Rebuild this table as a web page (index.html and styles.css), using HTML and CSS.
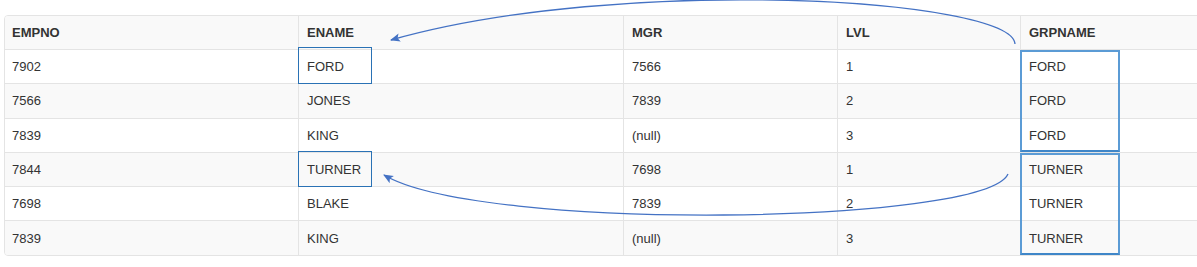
FILE: index.html
```html
<!DOCTYPE html>
<html lang="en">
<head>
<meta charset="utf-8">
<title>Hierarchy query result</title>
<link rel="stylesheet" href="styles.css">
</head>
<body>
<div class="stage">
  <div class="frame">
    <table class="grid">
      <colgroup>
        <col class="c1"><col class="c2"><col class="c3"><col class="c4"><col class="c5">
      </colgroup>
      <thead>
        <tr><th>EMPNO</th><th>ENAME</th><th>MGR</th><th>LVL</th><th>GRPNAME</th></tr>
      </thead>
      <tbody>
        <tr><td>7902</td><td>FORD</td><td>7566</td><td>1</td><td>FORD</td></tr>
        <tr><td>7566</td><td>JONES</td><td>7839</td><td>2</td><td>FORD</td></tr>
        <tr><td>7839</td><td>KING</td><td>(null)</td><td>3</td><td>FORD</td></tr>
        <tr><td>7844</td><td>TURNER</td><td>7698</td><td>1</td><td>TURNER</td></tr>
        <tr><td>7698</td><td>BLAKE</td><td>7839</td><td>2</td><td>TURNER</td></tr>
        <tr><td>7839</td><td>KING</td><td>(null)</td><td>3</td><td>TURNER</td></tr>
      </tbody>
    </table>
  </div>

  <div class="mark mark-ename mark-ford"></div>
  <div class="mark mark-ename mark-turner"></div>
  <div class="mark mark-grp mark-grp-ford"></div>
  <div class="mark mark-grp mark-grp-turner"></div>

  <svg class="arrows" width="1197" height="267" viewBox="0 0 1197 267" xmlns="http://www.w3.org/2000/svg">
    <defs>
      <marker id="head" markerUnits="userSpaceOnUse" markerWidth="10" markerHeight="10" viewBox="0 0 10 10" refX="9" refY="5" orient="auto">
        <path d="M0 0.8 L10 5 L0 9.2 L2.2 5 Z" fill="#4472c4"/>
      </marker>
    </defs>
    <path d="M1015 44 C1012 -2, 620 -25, 391 40" fill="none" stroke="#4472c4" stroke-width="1.3" marker-end="url(#head)"/>
    <path d="M1008 174 C985 225, 480 232, 384 175" fill="none" stroke="#4472c4" stroke-width="1.3" marker-end="url(#head)"/>
  </svg>
</div>
</body>
</html>
```

FILE: styles.css
```css
html, body {
  margin: 0;
  padding: 0;
  background: #ffffff;
  overflow: hidden;
}

.stage {
  position: relative;
  width: 1197px;
  height: 267px;
  padding: 15px 0 0 4px;
  box-sizing: border-box;
  font-family: "Liberation Sans", Arial, Helvetica, sans-serif;
  font-size: 13px;
  color: #333333;
}

.frame {
  width: 1230px;
  border: 1px solid #e4e4e4;
  border-radius: 4px;
  overflow: hidden;
}

.grid {
  width: 100%;
  border-collapse: separate;
  border-spacing: 0;
  table-layout: fixed;
}

.c1 { width: 293px; }
.c2 { width: 325px; }
.c3 { width: 214px; }
.c4 { width: 183px; }

.grid th,
.grid td {
  box-sizing: border-box;
  height: 34.3px;
  padding: 0 8px;
  line-height: 17px;
  text-align: left;
  vertical-align: middle;
  border-top: 1px solid #e4e4e4;
  border-left: 1px solid #e4e4e4;
  white-space: nowrap;
}

.grid th {
  height: 33px;
  border-top: 0;
  font-weight: bold;
  background: #f9f9f9;
}

.grid th:first-child,
.grid td:first-child {
  border-left: 0;
  padding-left: 7px;
}

.grid tbody tr:nth-child(even) td {
  background: #f9f9f9;
}

.mark {
  position: absolute;
  box-sizing: border-box;
  pointer-events: none;
}

.mark-ename {
  left: 298px;
  width: 74px;
  border: 1.5px solid #2a72b5;
}

.mark-ford { top: 47px; height: 37px; }
.mark-turner { top: 151px; height: 36px; }

.mark-grp {
  left: 1020px;
  width: 100px;
  border: 2px solid #5b9bd5;
  border-bottom-color: #3f86c8;
}

.mark-grp-ford { top: 50px; height: 102px; }
.mark-grp-turner { top: 153px; height: 102px; }

.arrows {
  position: absolute;
  left: 0;
  top: 0;
  pointer-events: none;
}
```
